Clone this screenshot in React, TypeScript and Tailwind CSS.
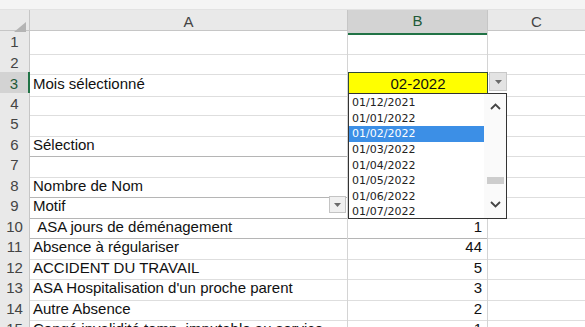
import React from 'react';

const rows: { n: number; a?: string; b?: string; strong?: boolean }[] = [
  { n: 1 },
  { n: 2 },
  { n: 3, a: 'Mois sélectionné' },
  { n: 4 },
  { n: 5 },
  { n: 6, a: 'Sélection', strong: true },
  { n: 7 },
  { n: 8, a: 'Nombre de Nom', strong: true },
  { n: 9, a: 'Motif', strong: true },
  { n: 10, a: '\u00a0ASA jours de déménagement', b: '1', strong: true },
  { n: 11, a: 'Absence à régulariser', b: '44' },
  { n: 12, a: 'ACCIDENT DU TRAVAIL', b: '5' },
  { n: 13, a: "ASA Hospitalisation d'un proche parent", b: '3' },
  { n: 14, a: 'Autre Absence', b: '2' },
  { n: 15, a: 'Congé invalidité temp. imputable au service', b: '1' },
];

const dates = [
  '01/12/2021',
  '01/01/2022',
  '01/02/2022',
  '01/03/2022',
  '01/04/2022',
  '01/05/2022',
  '01/06/2022',
  '01/07/2022',
];

function SmallArrow() {
  return (
    <svg width="7" height="4" viewBox="0 0 7 4">
      <path d="M0 0h7L3.5 4z" fill="#6b6b6b" />
    </svg>
  );
}

export default function App() {
  return (
    <div
      className="relative w-[585px] h-[327px] overflow-hidden bg-white text-[15px] text-[#111]"
      style={{ fontFamily: '"Liberation Sans", Arial, sans-serif' }}
    >
      <div className="h-[10px] bg-[#f4f4f4] border-b border-[#e2e2e2]" />
      {/* column headers */}
      <div className="grid grid-cols-[30px_318px_140px_97px] h-[21px] bg-[#e9e9e9] text-[15px] text-[#444] border-b border-[#c6c6c6]">
        <div className="relative border-r border-[#c6c6c6]">
          <svg className="absolute right-[3px] bottom-[3px]" width="12" height="10" viewBox="0 0 12 10">
            <path d="M12 0V10H0z" fill="#b4b4b4" />
          </svg>
        </div>
        <div className="flex items-center justify-center border-r border-[#c6c6c6]">A</div>
        <div className="flex items-center justify-center bg-[#d3d3d3] border-r border-[#c6c6c6] border-b-2 border-b-[#217346] text-[#1e5a38]">
          B
        </div>
        <div className="flex items-center justify-center">C</div>
      </div>
      {/* rows */}
      {rows.map((r) => (
        <div key={r.n} className="grid grid-cols-[30px_318px_140px_97px] h-[20.5px]">
          <div
            className={
              'flex items-center justify-center text-[15px] border-b border-[#d0d0d0] ' +
              (r.n === 3
                ? 'bg-[#d3d3d3] text-[#1e5a38] border-r-2 border-r-[#217346]'
                : 'bg-[#e9e9e9] text-[#444] border-r border-r-[#c6c6c6]')
            }
          >
            {r.n}
          </div>
          <div
            className={
              'relative flex items-center pl-[3px] whitespace-nowrap border-r border-[#d4d4d4] ' +
              (r.strong ? 'border-b border-b-[#b5b5b5]' : 'border-b border-b-[#dedede]')
            }
          >
            {r.a}
            {r.n === 9 && (
              <div className="absolute right-[1px] top-[1px] w-[17px] h-[17px] bg-[#f0f0f0] border border-[#c4c4c4] flex items-center justify-center">
                <SmallArrow />
              </div>
            )}
          </div>
          {r.n === 3 ? (
            <div className="relative flex items-center justify-center bg-[#ffff00] border border-[#2f4a36]">
              02-2022
              <div className="absolute right-[-3px] bottom-[-3px] w-[5px] h-[5px] bg-[#2f4a36] border border-white" />
            </div>
          ) : (
            <div
              className={
                'flex items-center justify-end pr-[5px] border-r border-[#d4d4d4] ' +
                (r.strong ? 'border-b border-b-[#b5b5b5]' : 'border-b border-b-[#dedede]')
              }
            >
              {r.b}
            </div>
          )}
          <div className="relative border-b border-[#dedede]">
            {r.n === 3 && (
              <div className="absolute left-[1px] top-0 w-[18px] h-[19px] bg-[#e3e3e3] border border-[#c8c8c8] flex items-center justify-center">
                <SmallArrow />
              </div>
            )}
          </div>
        </div>
      ))}
      {/* validation dropdown list */}
      <div
        className="absolute left-[348px] top-[93px] w-[159px] h-[126px] bg-white border border-[#333] flex"
        style={{ fontFamily: '"DejaVu Sans", sans-serif' }}
      >
        <div className="flex-1 pt-[1px] text-[11px] text-[#222]">
          {dates.map((d) => (
            <div
              key={d}
              className={
                'h-[15.6px] flex items-center pl-[3px] leading-none ' +
                (d === '01/02/2022' ? 'bg-[#3c8fe6] text-white' : '')
              }
            >
              {d}
            </div>
          ))}
        </div>
        <div className="w-[22px] flex flex-col items-center bg-[#fafafa]">
          <svg className="mt-[9px]" width="11" height="7" viewBox="0 0 11 7">
            <path d="M1 6L5.5 1.5L10 6" stroke="#444" strokeWidth="1.8" fill="none" />
          </svg>
          <div className="mt-[67px] w-[17px] h-[7px] bg-[#cdcdcd]" />
          <svg className="mt-[17px]" width="11" height="7" viewBox="0 0 11 7">
            <path d="M1 1L5.5 5.5L10 1" stroke="#444" strokeWidth="1.8" fill="none" />
          </svg>
        </div>
      </div>
    </div>
  );
}
